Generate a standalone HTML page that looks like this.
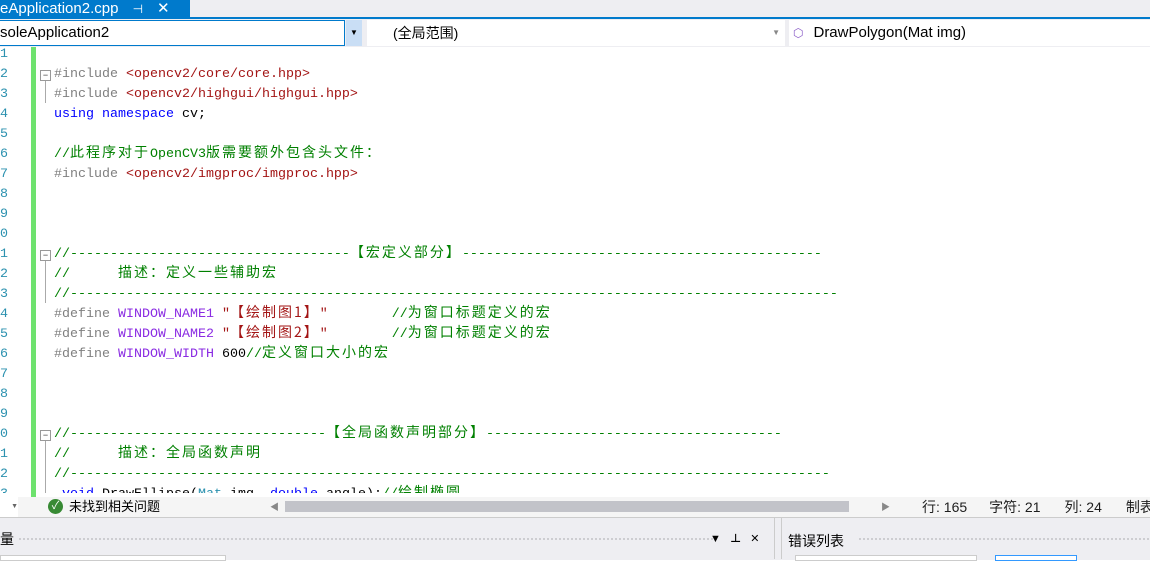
<!DOCTYPE html>
<html><head><meta charset="utf-8"><style>
body{margin:0;width:1150px;height:559px;overflow:hidden;background:#fff;font-family:"Liberation Sans","Noto Sans CJK SC",sans-serif;position:relative}
.a{position:absolute}
.code{font-family:"Liberation Mono","Noto Sans CJK SC",monospace;font-size:13.33px;white-space:normal}
.code div{height:20px;line-height:20px;overflow:visible;white-space:pre}
.c{font-family:"Noto Sans CJK SC",sans-serif;font-size:14px;letter-spacing:2px;line-height:14px}
.g{color:#008000}.gr{color:#808080}.r{color:#a31515}.b{color:#0000ff}.p{color:#8a2be2}
.ln{position:absolute;left:0;width:8px;text-align:right;color:#2b91af;font-family:"Liberation Mono",monospace;font-size:13.33px;line-height:20px}
.fold{position:absolute;left:40px;width:9px;height:9px;border:1px solid #999;background:#fff;font-size:9px;line-height:8px;text-align:center;color:#333}
.vl{position:absolute;left:45px;border-left:1px solid #aaa}
</style></head><body>
<div class="a" style="left:0;top:0;width:1150px;height:17px;background:#eeeef2"></div>
<div class="a" style="left:0;top:0;width:190px;height:17px;background:#007acc;color:#fff;font-size:15px;line-height:17px;white-space:nowrap">eApplication2.cpp <span style="margin-left:10px;font-size:12px">⊣</span><span style="margin-left:14px">✕</span></div>
<div class="a" style="left:0;top:17px;width:1150px;height:2px;background:#007acc"></div>
<div class="a" style="left:0;top:19px;width:1150px;height:28px;background:#eeeef2"></div>
<div class="a" style="left:0;top:20px;width:344px;height:24px;border:1px solid #007acc;border-left:none;background:#fff;font-size:15px;line-height:24px;white-space:nowrap">soleApplication2</div>
<div class="a" style="left:346px;top:20px;width:16px;height:26px;background:#c9def5;font-size:8px;line-height:26px;text-align:center">▼</div>
<div class="a" style="left:367px;top:20px;width:418px;height:26px;background:#fff;font-size:14px;line-height:26px;white-space:nowrap"><span style="margin-left:26px">(全局范围)</span><span class="a" style="right:5px;font-size:8px;color:#888">▼</span></div>
<div class="a" style="left:789px;top:20px;width:361px;height:26px;background:#fff;font-size:15px;line-height:26px;white-space:nowrap"><span style="margin-left:4px;color:#8a5cc7;font-size:12px">⬡</span><span style="margin-left:10px">DrawPolygon(Mat img)</span></div>
<div class="a" style="left:31px;top:47px;width:5px;height:450px;background:#6ee26e"></div>
<div class="a" style="left:0;top:47px;width:20px;height:446px;overflow:hidden">
<div class="ln" style="top:-2px">1</div><div class="ln" style="top:18px">2</div><div class="ln" style="top:38px">3</div><div class="ln" style="top:58px">4</div><div class="ln" style="top:78px">5</div><div class="ln" style="top:98px">6</div><div class="ln" style="top:118px">7</div><div class="ln" style="top:138px">8</div><div class="ln" style="top:158px">9</div><div class="ln" style="top:178px">0</div><div class="ln" style="top:198px">1</div><div class="ln" style="top:218px">2</div><div class="ln" style="top:238px">3</div><div class="ln" style="top:258px">4</div><div class="ln" style="top:278px">5</div><div class="ln" style="top:298px">6</div><div class="ln" style="top:318px">7</div><div class="ln" style="top:338px">8</div><div class="ln" style="top:358px">9</div><div class="ln" style="top:378px">0</div><div class="ln" style="top:398px">1</div><div class="ln" style="top:418px">2</div><div class="ln" style="top:438px">3</div>
</div>
<div class="fold" style="top:70px">−</div><div class="vl" style="top:81px;height:22px"></div>
<div class="fold" style="top:250px">−</div><div class="vl" style="top:261px;height:42px"></div>
<div class="fold" style="top:430px">−</div><div class="vl" style="top:441px;height:52px"></div>
<div class="a" style="left:0;top:47px;width:1150px;height:446px;overflow:hidden">
<div class="a code" style="left:54px;top:18px">
<div><span class="gr">#include </span><span class="r">&lt;opencv2/core/core.hpp&gt;</span></div>
<div><span class="gr">#include </span><span class="r">&lt;opencv2/highgui/highgui.hpp&gt;</span></div>
<div><span class="b">using</span> <span class="b">namespace</span> cv;</div>
<div></div>
<div><span class="g">//<span class="c">此程序对于</span>OpenCV3<span class="c">版需要额外包含头文件：</span></span></div>
<div><span class="gr">#include </span><span class="r">&lt;opencv2/imgproc/imgproc.hpp&gt;</span></div>
<div></div><div></div><div></div>
<div><span class="g">//-----------------------------------<span class="c">【宏定义部分】</span>---------------------------------------------</span></div>
<div><span class="g">//      <span class="c">描述：定义一些辅助宏</span></span></div>
<div><span class="g">//------------------------------------------------------------------------------------------------</span></div>
<div><span class="gr">#define </span><span class="p">WINDOW_NAME1</span> <span class="r">"<span class="c">【绘制图1】</span>"</span>        <span class="g">//<span class="c">为窗口标题定义的宏</span></span></div>
<div><span class="gr">#define </span><span class="p">WINDOW_NAME2</span> <span class="r">"<span class="c">【绘制图2】</span>"</span>        <span class="g">//<span class="c">为窗口标题定义的宏</span></span></div>
<div><span class="gr">#define </span><span class="p">WINDOW_WIDTH</span> 600<span class="g">//<span class="c">定义窗口大小的宏</span></span></div>
<div></div><div></div><div></div>
<div><span class="g">//--------------------------------<span class="c">【全局函数声明部分】</span>-------------------------------------</span></div>
<div><span class="g">//      <span class="c">描述：全局函数声明</span></span></div>
<div><span class="g">//-----------------------------------------------------------------------------------------------</span></div>
<div> <span class="b">void</span> DrawEllipse(<span style="color:#2b91af">Mat</span> img, <span class="b">double</span> angle);<span class="g">//<span class="c">绘制椭圆</span></span></div>
</div></div>
<div class="a" style="left:0;top:497px;width:1150px;height:20px;background:#f5f5f5"></div>
<div class="a" style="left:0;top:497px;width:18px;height:20px;background:#fff;font-size:7px;color:#666;line-height:20px;text-align:right">▼</div>
<div class="a" style="left:48px;top:499px;width:15px;height:15px;border-radius:50%;background:#388a34;color:#fff;font-size:11px;line-height:15px;text-align:center">✓</div>
<div class="a" style="left:69px;top:497px;font-size:13px;line-height:20px">未找到相关问题</div>
<div class="a" style="left:270px;top:500px;font-size:9px;color:#888;line-height:14px">◀</div>
<div class="a" style="left:285px;top:501px;width:564px;height:11px;background:#c2c3c9"></div>
<div class="a" style="left:881px;top:500px;font-size:9px;color:#888;line-height:14px">▶</div>
<div class="a" style="left:922px;top:497px;font-size:14px;line-height:20px;white-space:nowrap;color:#1e1e1e">行: 165<span style="margin-left:22px">字符: 21</span><span style="margin-left:24px">列: 24</span><span style="margin-left:24px">制表</span></div>
<div class="a" style="left:0;top:517px;width:1150px;height:42px;background:#eeeef2;border-top:1px solid #ccc"></div>
<div class="a" style="left:0;top:518px;width:774px;height:41px;border-right:1px solid #ccc"></div>
<div class="a" style="left:0;top:529px;font-size:14px">量</div>
<div class="a" style="left:18px;top:537px;width:700px;height:5px;background-image:radial-gradient(#c8c8cc 35%,transparent 40%);background-size:4px 4px"></div>
<div class="a" style="left:710px;top:530px;font-size:11px;white-space:nowrap">▼&nbsp;&nbsp;&nbsp;<b>⊥</b>&nbsp;&nbsp;&nbsp;✕</div>
<div class="a" style="left:0;top:555px;width:224px;height:4px;background:#fff;border:1px solid #ccc"></div>
<div class="a" style="left:781px;top:518px;width:369px;height:41px;border-left:1px solid #ccc"></div>
<div class="a" style="left:788px;top:531px;font-size:14px">错误列表</div>
<div class="a" style="left:858px;top:537px;width:292px;height:5px;background-image:radial-gradient(#c8c8cc 35%,transparent 40%);background-size:4px 4px"></div>
<div class="a" style="left:795px;top:555px;width:180px;height:4px;background:#fff;border:1px solid #ccc"></div>
<div class="a" style="left:995px;top:555px;width:80px;height:4px;background:#fff;border:1px solid #3399ff"></div>
</body></html>
